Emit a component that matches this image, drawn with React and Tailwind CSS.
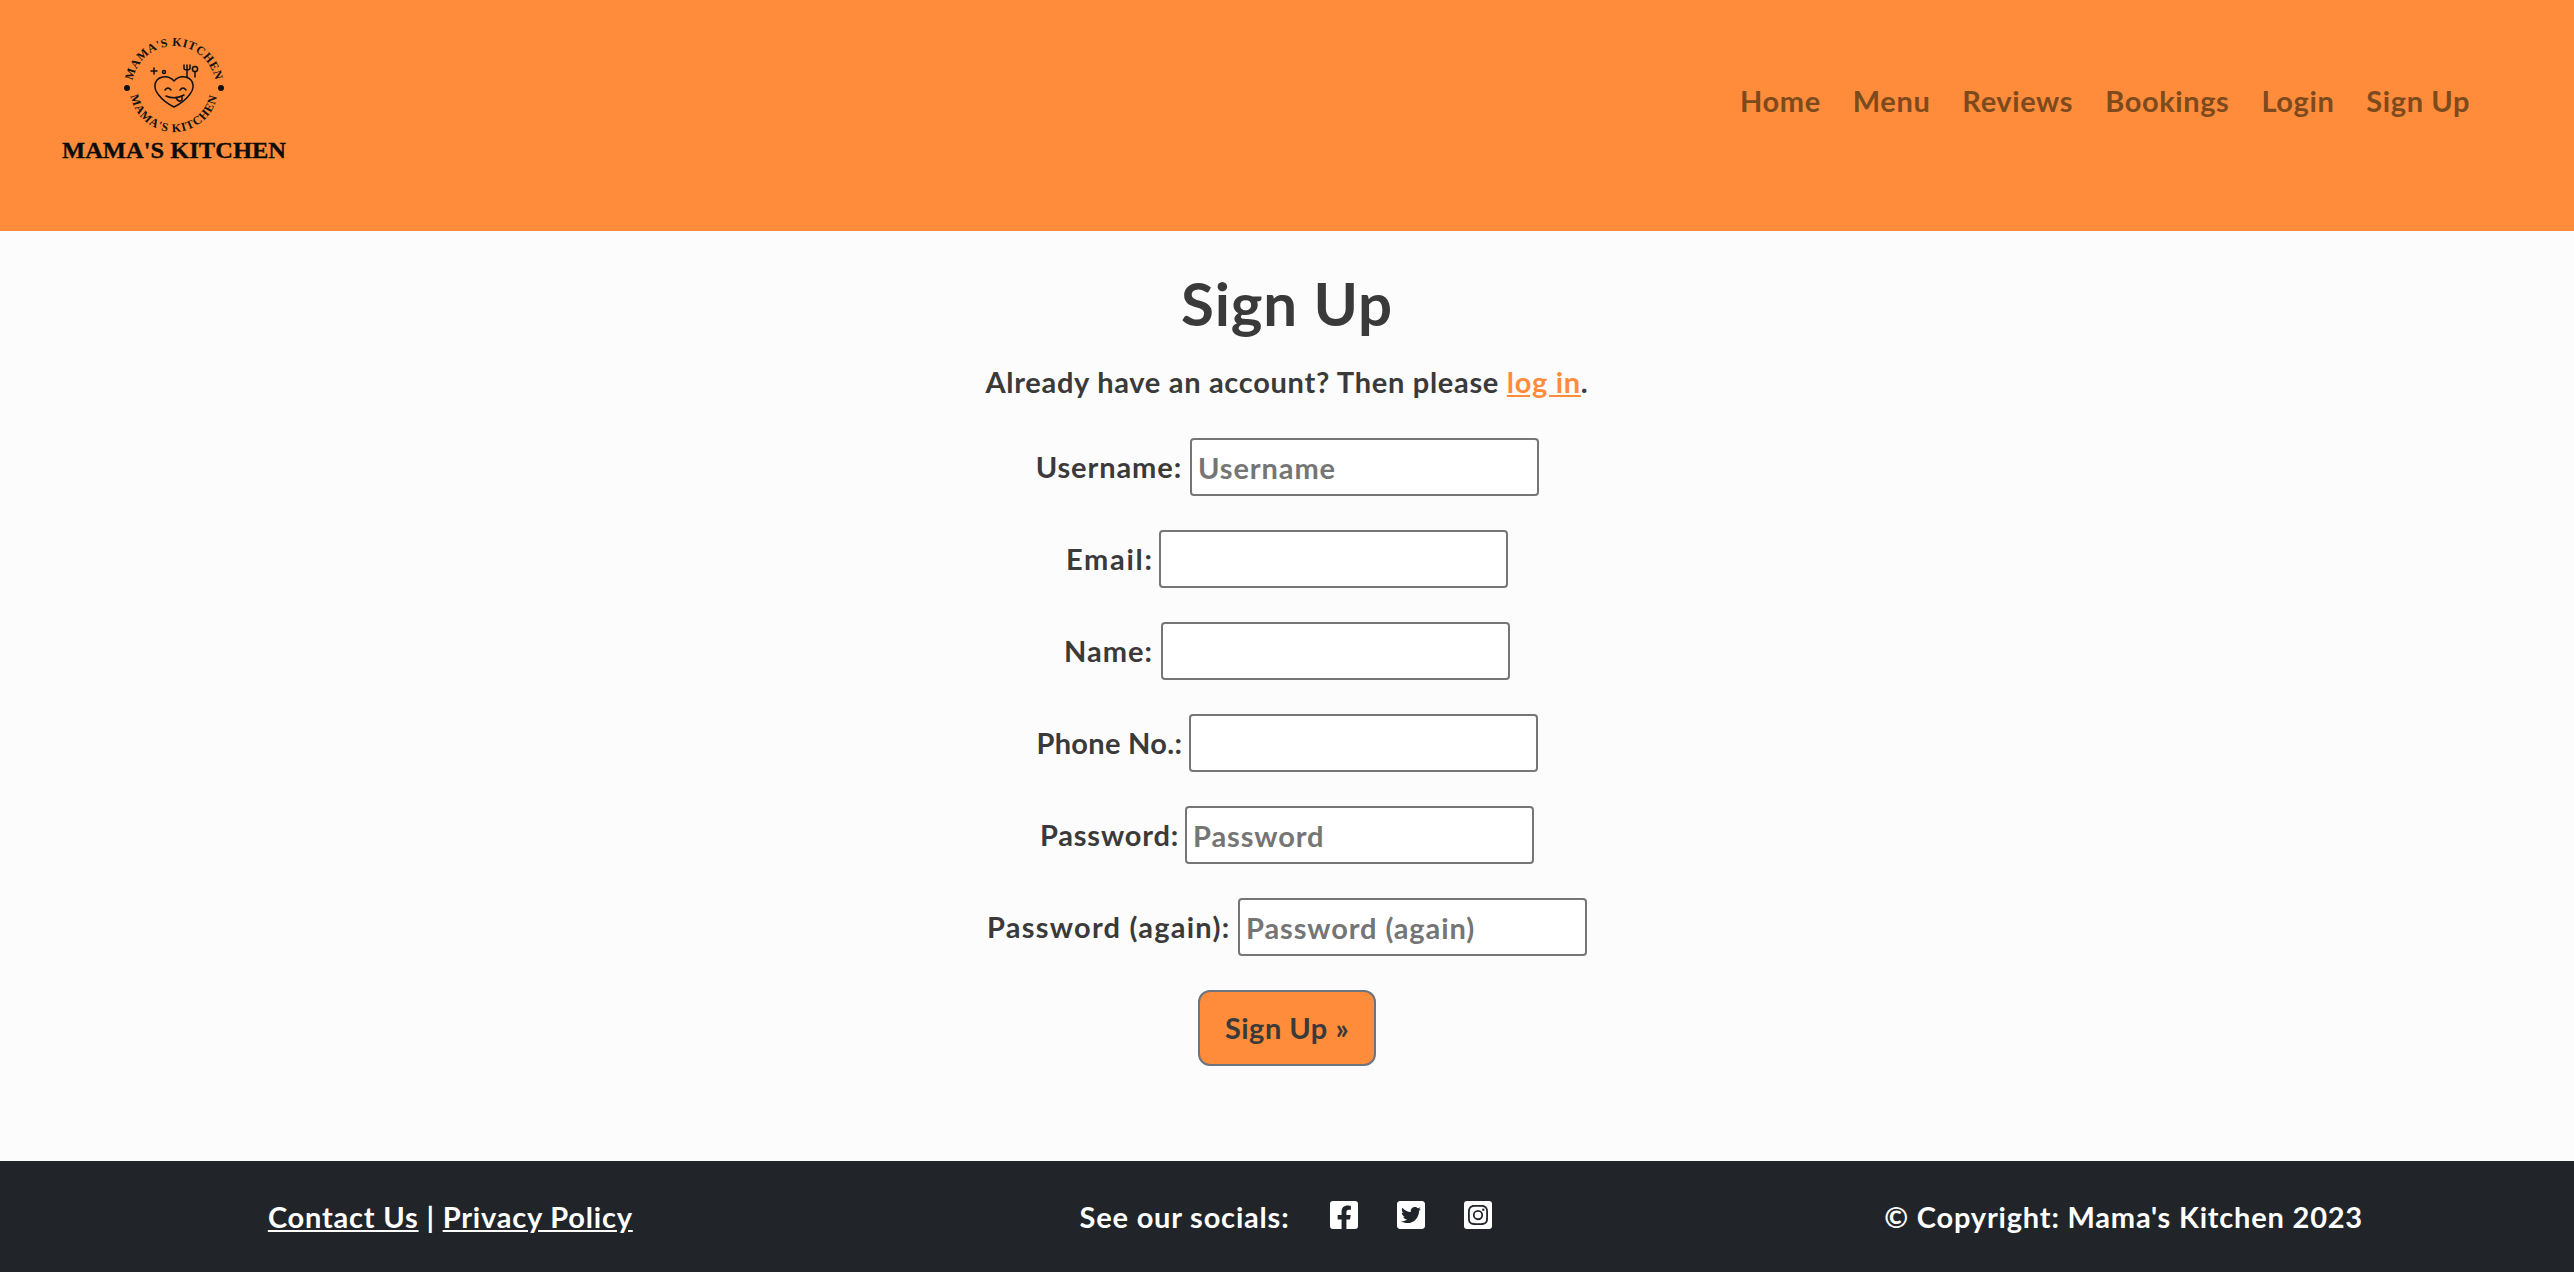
import React from "react";
import { FaFacebookSquare, FaTwitterSquare, FaInstagramSquare } from "react-icons/fa";

const font = { fontFamily: '"Lato","Noto Sans",sans-serif' };

function Logo() {
  return (
    <div className="w-[300px] h-[170px] shrink-0">
      <svg width="300" height="170" viewBox="0 0 300 170">
        <defs>
          <path id="arcTop" d="M132 88 A42 42 0 0 1 216 88" fill="none" />
          <path id="arcBot" d="M130 88 A44 44 0 0 0 218 88" fill="none" />
        </defs>
        <text fontFamily="'Liberation Serif',serif" fontWeight="700" fontSize="12" fill="#111" textAnchor="middle" letterSpacing="0.5">
          <textPath href="#arcTop" startOffset="50%">MAMA'S KITCHEN</textPath>
        </text>
        <text fontFamily="'Liberation Serif',serif" fontWeight="700" fontSize="12" fill="#111" textAnchor="middle" letterSpacing="0.9">
          <textPath href="#arcBot" startOffset="50%">MAMA'S KITCHEN</textPath>
        </text>
        <circle cx="127" cy="88" r="3" fill="#111" />
        <circle cx="221" cy="88" r="3" fill="#111" />
        <g fill="none" stroke="#111" strokeWidth="1.5" strokeLinecap="round" strokeLinejoin="round">
          <path d="M174 107 C160 100 154 90 155 85 C156 76 168 74 174 81 C180 74 192 76 193 85 C194 90 188 100 174 107 Z" />
          <path d="M165 90 Q168 86 171 90 M180 90 Q183 86 186 90" />
          <path d="M166 96 Q175 100 184 95 M176 98 Q179 103 182 100 L182 96" />
          <path d="M151 71 h6 M154 68 v6" />
          <circle cx="164" cy="72" r="1.5" />
          <path d="M187 65 v12 M184 65 v3 q0 2 3 2 q3 0 3 -2 v-3" />
          <circle cx="195" cy="69" r="2.6" />
          <path d="M195 72 v5" />
        </g>
        <text x="62" y="158" fontFamily="'Liberation Serif',serif" fontWeight="700" fontSize="24" stroke="#0c0c0c" strokeWidth="0.3" fill="#0c0c0c" textLength="224" lengthAdjust="spacingAndGlyphs">MAMA'S KITCHEN</text>
      </svg>
    </div>
  );
}

function Row({ label, placeholder, labelClass }) {
  return (
    <div className="flex justify-center items-center gap-2 h-[58px] mb-[34px]">
      <label className={`text-[29px] font-bold text-[#3a3a3a] text-right whitespace-nowrap ${labelClass}`}>{label}</label>
      <input
        placeholder={placeholder}
        className="w-[349px] h-[58px] border-2 border-[#767676] rounded-[4px] bg-white px-[6px] text-[29px] tracking-[0.9px] font-bold placeholder:text-[#757575]"
        style={font}
      />
    </div>
  );
}

export default function App() {
  return (
    <div className="min-h-[1272px] flex flex-col bg-[#fcfcfc]" style={font}>
      <header className="h-[231px] bg-[#ff8c3a] flex justify-between items-start pr-[104px]">
        <Logo />
        <nav className="flex gap-[32px] mt-[79px] text-[29px] tracking-[0.6px] font-bold text-[#7d4a1e]">
          <a>Home</a><a>Menu</a><a>Reviews</a><a>Bookings</a><a>Login</a><a>Sign Up</a>
        </nav>
      </header>
      <main className="flex-1 text-center">
        <h1 className="text-[60px] tracking-[0.9px] font-bold text-[#3a3a3a] leading-[68px] mt-[38px]">Sign Up</h1>
        <p className="text-[29px] tracking-[0.7px] font-bold text-[#3a3a3a] mt-[25px] mb-[36px] leading-[40px]">
          Already have an account? Then please <a className="text-[#ff8c3a] underline">log in</a>.
        </p>
        <Row label="Username:" placeholder="Username" labelClass="w-[147px] tracking-[0.9px]" />
        <Row label="Email:" labelClass="w-[85px] tracking-[1.7px]" />
        <Row label="Name:" labelClass="w-[89px] tracking-[1px]" />
        <Row label="Phone No.:" labelClass="w-[144px] tracking-[0.3px]" />
        <Row label="Password:" placeholder="Password" labelClass="w-[137px] tracking-[0.8px]" />
        <Row label="Password (again):" placeholder="Password (again)" labelClass="w-[243px] tracking-[1.25px]" />
        <button className="w-[178px] h-[76px] bg-[#ff8c3a] border-2 border-[#6c757d] rounded-[12px] text-[29px] tracking-[0.5px] font-bold text-[#3a3a3a]">Sign Up »</button>
      </main>
      <footer className="h-[111px] bg-[#212529] text-white grid grid-cols-3 items-center px-8 text-[29px] tracking-[0.8px] font-bold">
        <div className="text-center"><a className="underline">Contact Us</a> | <a className="underline">Privacy Policy</a></div>
        <div className="flex justify-center items-center gap-[39px]">
          <span>See our socials:</span>
          <div className="flex gap-[35px] -mt-[3px]">
            <FaFacebookSquare size={32} />
            <FaTwitterSquare size={32} />
            <FaInstagramSquare size={32} />
          </div>
        </div>
        <div className="text-center">© Copyright: Mama's Kitchen 2023</div>
      </footer>
    </div>
  );
}
